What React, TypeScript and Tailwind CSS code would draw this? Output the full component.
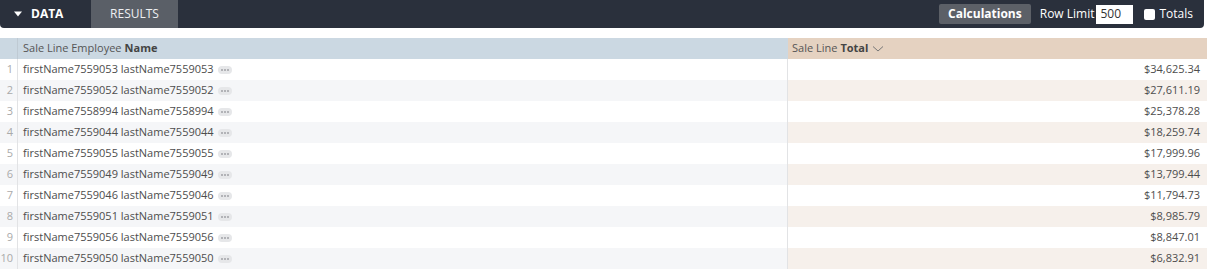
const rows = [
  ["firstName7559053 lastName7559053", "$34,625.34"],
  ["firstName7559052 lastName7559052", "$27,611.19"],
  ["firstName7558994 lastName7558994", "$25,378.28"],
  ["firstName7559044 lastName7559044", "$18,259.74"],
  ["firstName7559055 lastName7559055", "$17,999.96"],
  ["firstName7559049 lastName7559049", "$13,799.44"],
  ["firstName7559046 lastName7559046", "$11,794.73"],
  ["firstName7559051 lastName7559051", "$8,985.79"],
  ["firstName7559056 lastName7559056", "$8,847.01"],
  ["firstName7559050 lastName7559050", "$6,832.91"],
];

const Dots = () => (
  <span className="ml-[4px] inline-flex h-[8px] w-[14px] items-center justify-center gap-[1px] rounded-full bg-[#e6e7e9]">
    <span className="h-[2px] w-[2px] rounded-full bg-[#a0a2a6]" />
    <span className="h-[2px] w-[2px] rounded-full bg-[#a0a2a6]" />
    <span className="h-[2px] w-[2px] rounded-full bg-[#a0a2a6]" />
  </span>
);

export default function App() {
  return (
    <div className="w-[1207px] h-[272px] bg-white font-['Open_Sans',sans-serif] text-[11px] overflow-hidden">
      <div className="flex h-[28px] w-[1204px] items-center rounded-b-[4px] bg-[#2a303c] text-[12px] text-white">
        <div className="flex h-full w-[91px] items-center pl-[14px]">
          <svg width="8" height="6" viewBox="0 0 8 6" className="mr-[9px]">
            <path d="M0 0.5 L8 0.5 L4 5.5 Z" fill="#fff" />
          </svg>
          <span className="font-bold">DATA</span>
        </div>
        <div className="flex h-full w-[87px] items-center justify-center bg-[#5a5f67] text-[#eef0f2]">
          RESULTS
        </div>
        <div className="ml-auto flex items-center pr-[11px]">
          <div className="flex h-[20px] items-center rounded-[2px] bg-[#5c6067] px-[9px] font-bold">
            Calculations
          </div>
          <span className="ml-[9px]">Row Limit</span>
          <div className="ml-[2px] flex h-[19px] w-[37px] items-center bg-white pl-[4px] text-[#333]">500</div>
          <span className="ml-[11px] h-[11px] w-[11px] rounded-[2px] bg-white" />
          <span className="ml-[4px]">Totals</span>
        </div>
      </div>
      <div className="mt-[10px] flex flex-col text-[#4d4d4d]">
        <div className="flex h-[21px]">
          <div className="w-[18px] border-r border-[#bfcad3] bg-[#cbd8e2]" />
          <div className="flex w-[770px] items-center bg-[#cbd8e2] pl-[5px] text-[#555]">
            Sale Line Employee <span className="ml-[3px] font-bold text-[#444]">Name</span>
          </div>
          <div className="flex flex-1 items-center bg-[#e5d2c1] pl-[4px] text-[#555]">
            Sale Line <span className="ml-[3px] font-bold text-[#444]">Total</span>
            <svg width="12" height="8" viewBox="0 0 12 8" className="ml-[4px]">
              <path d="M1 1.5 L6 6 L11 1.5" fill="none" stroke="#777" strokeWidth="1" />
            </svg>
          </div>
        </div>
        {rows.map(([name, total], i) => (
          <div key={i} className="flex h-[21px]">
            <div className={`flex w-[18px] items-center justify-end border-r border-[#e2e3e5] pr-[4px] text-[#aaa] ${i % 2 ? "bg-[#f5f6f8]" : "bg-white"}`}>
              {i + 1}
            </div>
            <div className={`flex w-[770px] items-center border-r border-[#e2e3e5] pl-[5px] ${i % 2 ? "bg-[#f5f6f8]" : "bg-white"}`}>
              {name}
              <Dots />
            </div>
            <div className={`flex flex-1 items-center justify-end pr-[7px] ${i % 2 ? "bg-[#f6f0eb]" : "bg-white"}`}>
              {total}
            </div>
          </div>
        ))}
      </div>
    </div>
  );
}
